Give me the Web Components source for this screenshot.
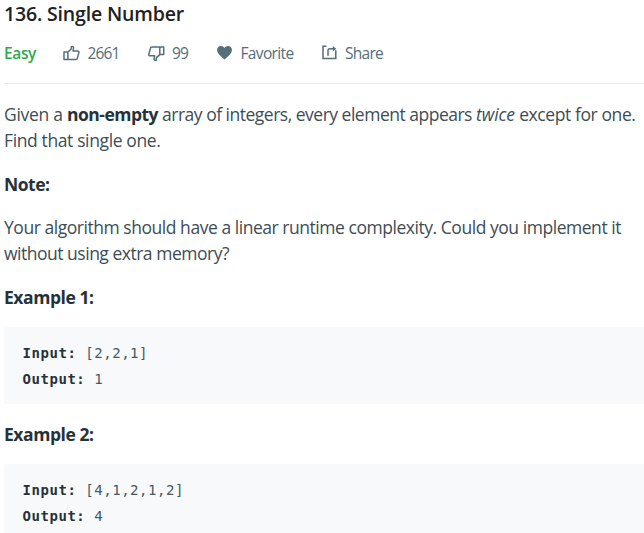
<!DOCTYPE html>
<html lang="en"><head><meta charset="utf-8"><title>136. Single Number</title>
<style>html,body{margin:0;background:#fff;overflow:hidden}</style></head>
<body><problem-page></problem-page>
<script>
// Inline run of text whose tracking is adjusted to a given advance width.
class TextRun extends HTMLElement {
  connectedCallback() {
    this.attachShadow({mode:'open'}).innerHTML =
      '<style>:host{display:inline-block;white-space:pre}</style><slot></slot>';
    const w = +this.getAttribute('w');
    const natural = this.getBoundingClientRect().width;
    this.style.letterSpacing = ((w - natural) / this.textContent.length).toFixed(3) + 'px';
    this.style.width = w + 'px';
  }
}
class ProblemAction extends HTMLElement {
  connectedCallback() {
    this.attachShadow({mode:'open'}).innerHTML = `
      <style>:host{display:flex;align-items:center;color:#546e7a;height:26px}
      ::slotted(svg){display:block;flex:none;margin-right:7.5px}</style>
      <slot name="icon"></slot><slot></slot>`;
  }
}
class CodeExample extends HTMLElement {
  connectedCallback() {
    this.attachShadow({mode:'open'}).innerHTML = `
      <style>:host{display:block;box-sizing:border-box;height:77px;margin-right:-8px;padding:13px 18.6px 12px;background:#f7f9fa;border-radius:3px;
      font:14px/26px "DejaVu Sans Mono",monospace;letter-spacing:.53px;color:#455a64}
      div{white-space:pre} b{color:#263238}</style>
      <div><b>Input:</b> <slot name="input"></slot></div><div><b>Output:</b> <slot name="output"></slot></div>`;
  }
}
class ProblemPage extends HTMLElement {
  connectedCallback() {
    this.attachShadow({mode:'open'}).innerHTML = `
    <style>
      :host{display:block;box-sizing:border-box;width:644px;height:533px;overflow:hidden;padding-left:4px;
        font:17.5px/26px "Open Sans","Noto Sans",sans-serif;color:#3d4d55}
      h1{margin:0;padding-top:1px;font-size:19.5px;font-weight:600;line-height:26px;color:#212121}
      .bar{display:flex;align-items:center;height:26px;margin-top:13px;font-size:15.5px}
      .easy{font-weight:600;color:#2fa84f;margin-right:27px}
      problem-action{margin-right:28px}
      .fav{margin-left:1px}
      hr{border:0;height:1px;background:#e8eaeb;margin:17px 0 17px}
      p,h2{margin:0;white-space:nowrap;height:26px}
      b,h2{font-weight:700;color:#263238;font-size:17.5px}
      .note{margin:18px 0 17px}
      .ex1{margin:18px 0 17px}
      .ex2{margin:17px 0 17px}
    </style>
    <h1><text-run w="180">136. Single Number</text-run></h1>
    <div class="bar">
      <span class="easy"><text-run w="32">Easy</text-run></span>
      <problem-action><svg slot="icon" width="17" height="17" viewBox="0 0 17 17" fill="none" stroke="#546e7a" stroke-width="1.5" stroke-linejoin="round"><path d="M1 7h3.9v7.6H1zM4.9 7 8.2 4l.2-2.4c1.4-.5 2.2.2 2.2 1.3L10 6h4.7c.9 0 1.4.6 1.2 1.4l-1.6 6c-.2.8-.7 1.2-1.5 1.2H4.9"/></svg><text-run w="32">2661</text-run></problem-action>
      <problem-action><svg slot="icon" width="17" height="17" viewBox="0 0 17 17" fill="none" stroke="#546e7a" stroke-width="1.5" stroke-linejoin="round"><path d="M15.7 9.6h-3.9V2h3.9zM11.8 9.6l-3.3 3-.2 2.6c-1.4.5-2.2-.3-2.2-1.4l.6-3H2c-.9 0-1.4-.6-1.2-1.4l1.6-6C2.6 2.4 3.1 2 3.9 2h7.9"/></svg><text-run w="16">99</text-run></problem-action>
      <problem-action class="fav"><svg slot="icon" width="16" height="16" viewBox="0 0 16 16" fill="#546e7a"><path d="M7.5 14.5C5.5 12.5.1 9.3.1 5 .1 2.6 1.8 1 3.9 1c1.6 0 2.9.8 3.6 2.1C8.2 1.8 9.5 1 11.1 1c2.1 0 3.8 1.6 3.8 4 0 4.3-5.4 7.5-7.4 9.5z"/></svg><text-run w="53">Favorite</text-run></problem-action>
      <problem-action><svg slot="icon" width="16" height="16" viewBox="0 0 16 16" fill="none" stroke="#546e7a" stroke-width="1.5"><path d="M4.5 1.2H1v12.3h12.8V5.2M6 10.7V5.5c0-1.1.7-1.8 1.8-1.8H12"/><path d="M10.8.9v5.6L14.3 3.7z" fill="#546e7a" stroke="none"/></svg><text-run w="38">Share</text-run></problem-action>
    </div>
    <hr>
    <p><text-run w="63">Given a </text-run><b><text-run w="91">non-empty</text-run></b><text-run w="318"> array of integers, every element appears </text-run><i><text-run w="39">twice</text-run></i><text-run w="120.5"> except for one.</text-run></p>
    <p><text-run w="156.5">Find that single one.</text-run></p>
    <h2 class="note"><text-run w="45.5">Note:</text-run></h2>
    <p><text-run w="617">Your algorithm should have a linear runtime complexity. Could you implement it</text-run></p>
    <p><text-run w="225">without using extra memory?</text-run></p>
    <h2 class="ex1"><text-run w="89.5">Example 1:</text-run></h2>
    <code-example><span slot="input">[2,2,1]</span><span slot="output">1</span></code-example>
    <h2 class="ex2"><text-run w="89.5">Example 2:</text-run></h2>
    <code-example><span slot="input">[4,1,2,1,2]</span><span slot="output">4</span></code-example>`;
  }
}
customElements.define('text-run', TextRun);
customElements.define('problem-action', ProblemAction);
customElements.define('code-example', CodeExample);
customElements.define('problem-page', ProblemPage);
</script></body></html>
